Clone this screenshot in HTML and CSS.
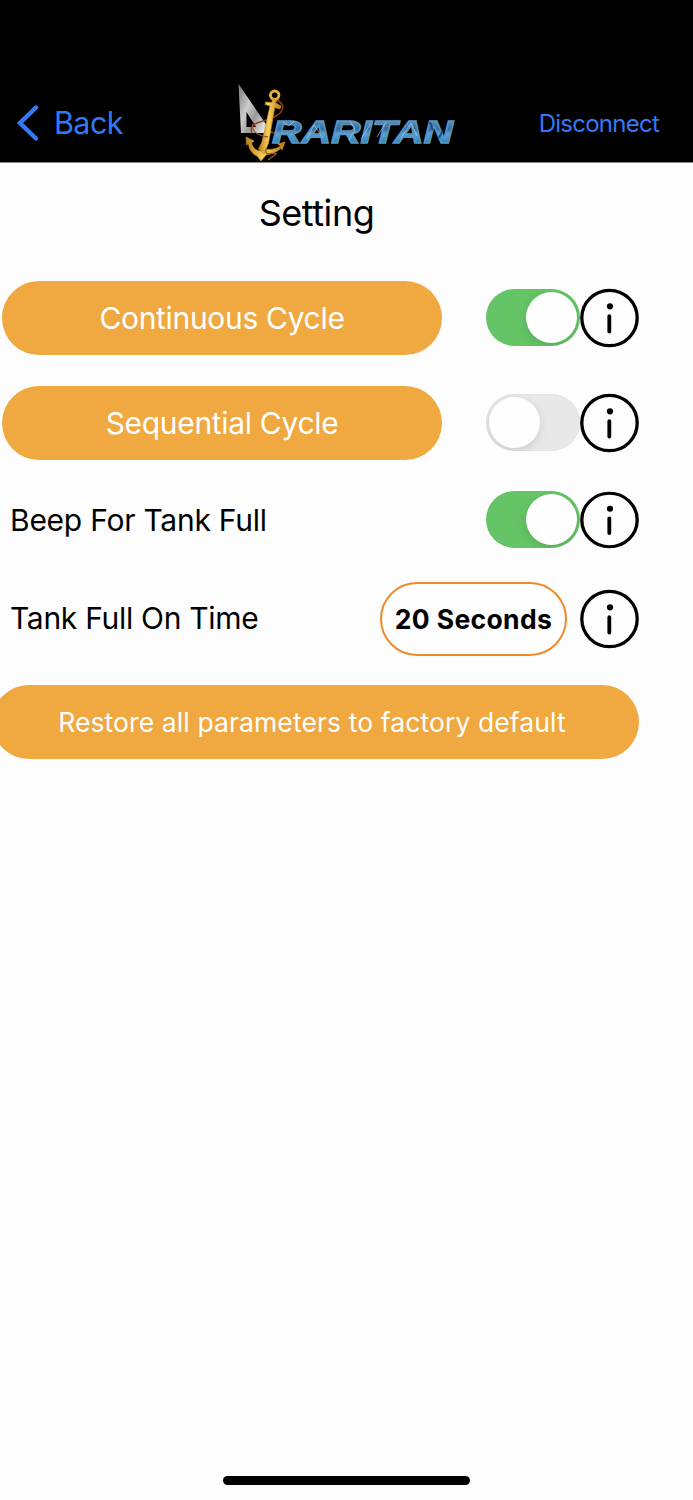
FILE: index.html
```html
<!DOCTYPE html>
<html lang="en">
<head>
<meta charset="utf-8">
<title>Setting</title>
<link rel="stylesheet" href="styles.css">
</head>
<body>
<svg width="0" height="0" class="defs" aria-hidden="true">
  <symbol id="info" viewBox="0 0 60 60">
    <circle cx="29.5" cy="30" r="27.7" fill="none" stroke="#000" stroke-width="3.3"/>
    <circle cx="30" cy="18.3" r="3.1"/>
    <path d="M29.3 28.2V43.5" stroke="#000" stroke-width="3.8" stroke-linecap="round"/>
  </symbol>
</svg>
<header class="navbar">
  <a class="back">
    <svg class="chevron" viewBox="0 0 22 36"><path d="M19 2.5L3 18L19 33.5" fill="none" stroke="#3478f6" stroke-width="4.4" stroke-linecap="round" stroke-linejoin="miter"/></svg>
    <span class="back-label">Back</span>
  </a>
  <svg class="logo" viewBox="230 78 230 84">
    <defs>
      <linearGradient id="steel" x1="0" x2="1" y1="0" y2=".6"><stop offset="0" stop-color="#777"/><stop offset=".4" stop-color="#ccc"/><stop offset=".65" stop-color="#999"/><stop offset="1" stop-color="#eee"/></linearGradient>
      <linearGradient id="gold" x1="0" x2="1"><stop offset="0" stop-color="#b87a1c"/><stop offset=".45" stop-color="#f8d45c"/><stop offset="1" stop-color="#b87514"/></linearGradient>
      <linearGradient id="water" x1="0" x2="0" y1="0" y2="1"><stop offset=".12" stop-color="#6c9fc9"/><stop offset=".42" stop-color="#2e6aa4"/><stop offset=".55" stop-color="#5fa0d0"/><stop offset=".85" stop-color="#1787c5"/></linearGradient>
    </defs>
    <path d="M238.5 84L272 133H241Z M246.5 112V127H256Z" fill="url(#steel)" fill-rule="evenodd"/>
    <path d="M277 100C285 104 285 112 274 117C263 123 248 121 252 133M266 131C277 133 281 134 278 142" fill="none" stroke="#8f3f1c" stroke-width="1.4"/>
    <text class="logo-text" x="272" y="142.8" textLength="181" lengthAdjust="spacingAndGlyphs" fill="url(#water)" stroke="#5c94be" stroke-width="1.3">RARITAN</text>
    <path d="M283 122L289 126L294 121M307 139L314 125L323 138M350 121L355 130L349 140M361 139L371 123M386 122L377 137M401 138L411 123L417 136" fill="none" stroke="#b9dcf3" stroke-width="1" opacity=".6"/>
    <path d="M430 122L433 130M439 138L443 130" fill="none" stroke="#133b70" stroke-width="2" opacity=".8"/>
    <g stroke="#c78b27" stroke-width=".7" stroke-linejoin="round">
      <circle cx="274.7" cy="95.3" r="4.2" fill="none" stroke="#e5ad3a" stroke-width="3"/>
      <path d="M246 137L254 141L251.5 143C253 149 257 151 261 151L264 149C271 150 277 149 280.5 146L278 144L285 142L282 150L281 148C276 153 270 154 266 155L261 161L257 156C252 154 249 149 248.5 143.5L246.5 145Z" fill="url(#gold)"/>
      <path d="M272.3 99L276.7 100L275.7 103L281 106L280 109L274.8 107.5L268.5 143L264 154L258.5 149L262 142L270 106L265 104.5L265.5 102L272 102.5Z" fill="url(#gold)"/>
    </g>
    <path d="M253 124C251 131 256 135 268 137M266 149C264 158 275 151 276 154L268 160" fill="none" stroke="#a75421" stroke-width="1.3"/>
  </svg>
  <a class="disconnect">Disconnect</a>
</header>
<main class="screen">
  <h1 class="title">Setting</h1>
  <section class="row row-cycle">
    <button class="pill cycle">Continuous Cycle</button>
    <div class="controls"><span class="switch on"><span class="knob"></span></span><svg class="info"><use href="#info"/></svg></div>
  </section>
  <section class="row row-cycle">
    <button class="pill cycle">Sequential Cycle</button>
    <div class="controls"><span class="switch"><span class="knob"></span></span><svg class="info"><use href="#info"/></svg></div>
  </section>
  <section class="row row-beep">
    <span class="label label-beep">Beep For Tank Full</span>
    <div class="controls"><span class="switch on"><span class="knob"></span></span><svg class="info info-flat" preserveAspectRatio="none" viewBox="0 0 60 60"><use href="#info" width="60" height="60"/></svg></div>
  </section>
  <section class="row row-time">
    <span class="label label-time">Tank Full On Time</span>
    <div class="controls"><button class="seconds">20 Seconds</button><svg class="info"><use href="#info"/></svg></div>
  </section>
  <button class="pill restore">Restore all parameters to factory default</button>
</main>
<footer class="home"><span class="home-bar"></span></footer>
</body>
</html>
```
FILE: styles.css
```css
* { box-sizing: border-box; }
body {
  margin: 0;
  width: 693px;
  height: 1500px;
  overflow: hidden;
  display: flex;
  flex-direction: column;
  background: #fdfdfd;
  color: #000;
  font-family: Inter, "Liberation Sans", sans-serif;
}
.defs { display: none; }
button { border: 0; padding: 0; margin: 0; font: inherit; white-space: nowrap; }
.navbar {
  height: 163px;
  flex: none;
  background: #000;
  border-bottom: 1px solid #8a8a8a;
  padding: 78px 34px 0 17px;
  display: grid;
  grid-template-columns: 213px 230px 1fr;
  color: #3478f6;
}
.back { display: flex; align-items: center; height: 90px; gap: 15px; }
.chevron { width: 22px; height: 36px; }
.back-label { font-size: 30.5px; line-height: 40px; letter-spacing: -.6px; padding-bottom: 1px; }
.logo { width: 230px; height: 84px; }
.logo-text { font: italic bold 32px "Liberation Sans", sans-serif; }
.disconnect { justify-self: end; font-size: 24px; line-height: 91px; letter-spacing: -.75px; white-space: nowrap; }
.screen { flex: 1; display: flex; flex-direction: column; }
.title { margin: 26px 0 44px; width: 633px; height: 48px; line-height: 48px; text-align: center; font-size: 36px; font-weight: 400; letter-spacing: -.45px; }
.row { display: flex; justify-content: space-between; align-items: center; width: 640px; }
.row-cycle { height: 74px; margin-bottom: 31px; padding-left: 2px; }
.row-beep { height: 58px; padding-left: 10px; }
.row-time { height: 74px; margin: 33px 0 29px; padding-left: 10px; }
.pill { background: #f0a840; color: #fff; border-radius: 37px; height: 74px; text-align: center; }
.cycle { width: 440px; font-size: 30px; letter-spacing: -.32px; }
.restore { width: 647px; margin-left: -8px; padding-right: 7px; font-size: 26.5px; letter-spacing: .1px; }
.label { font-size: 30px; line-height: 40px; white-space: nowrap; }
.label-beep { letter-spacing: -.25px; }
.label-time { letter-spacing: -.3px; padding-bottom: 2px; }
.controls { display: flex; align-items: center; }
.switch { width: 94px; height: 57px; border-radius: 29px; background: #e8e8e8; padding: 3px; display: flex; overflow: hidden; margin-bottom: 1px; box-shadow: inset 0 0 2px #ddd; }
.switch.on { background: #65c466; justify-content: flex-end; box-shadow: none; }
.knob { width: 51px; height: 51px; border-radius: 50%; background: #fefefe; box-shadow: 0 3px 10px rgba(0,0,0,.12); }
.info { width: 60px; height: 60px; }
.info-flat { height: 58px; }
.seconds { width: 187px; height: 74px; margin-right: 13px; border: 2.5px solid #ee8a2c; border-radius: 37px; background: #fefefe; color: #000; font-size: 26.5px; font-weight: 650; letter-spacing: .35px; }
.home { height: 40px; display: flex; justify-content: center; padding-top: 16px; }
.home-bar { width: 247px; height: 9px; border-radius: 5px; background: #000; }
```
